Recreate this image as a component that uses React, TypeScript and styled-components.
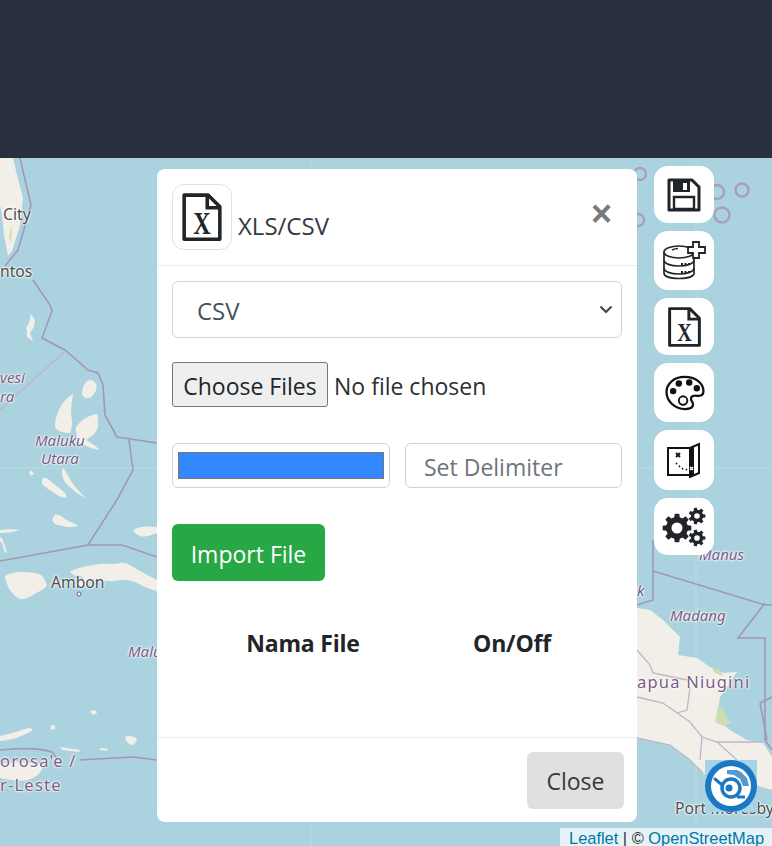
import React from 'react';
import styled, { createGlobalStyle } from 'styled-components';

const GlobalStyle = createGlobalStyle`
  html, body { margin: 0; padding: 0; height: 100%; overflow: hidden; }
  body { font-family: "Open Sans", "Noto Sans", sans-serif; color: #212529; background: #aad3df; }
`;

const Page = styled.div`
  width: 772px;
  height: 846px;
  display: flex;
  flex-direction: column;
  overflow: hidden;
`;

const TopBar = styled.header`
  height: 158px;
  flex: none;
  background: #282f3e;
`;

const MapArea = styled.main`
  position: relative;
  flex: 1;
  overflow: hidden;
  background: #aad3df;
`;

const MapSvg = styled.svg`
  display: block;
  width: 772px;
  height: 688px;
  filter: blur(0.5px);
`;

const MapLabel = styled.span<{ $x: number; $y: number; $kind: 'city' | 'region' | 'country' }>`
  position: absolute;
  left: ${({ $x }) => $x}px;
  top: ${({ $y }) => $y - 158}px;
  font-family: "Noto Sans", sans-serif;
  font-size: ${({ $kind }) => ($kind === 'country' ? 16.5 : $kind === 'city' ? 15.7 : 15)}px;
  font-style: ${({ $kind }) => ($kind === 'region' ? 'italic' : 'normal')};
  color: ${({ $kind }) => ($kind === 'city' ? '#4d4d4d' : '#7b5c85')};
  letter-spacing: ${({ $kind }) => ($kind === 'country' ? '1.2px' : '0')};
  line-height: 1;
  white-space: nowrap;
  text-shadow: 0 0 2px #fff, 0 0 2px #fff, 0 0 3px #fff;
`;

const ToolStack = styled.nav`
  position: absolute;
  left: 654px;
  top: 8px;
  display: flex;
  flex-direction: column;
  gap: 8px;
`;

const ToolButton = styled.button<{ $h: number }>`
  width: 60px;
  height: ${({ $h }) => $h}px;
  padding: 0;
  border: 0;
  border-radius: 14px;
  background: #fff;
  color: #212529;
  display: flex;
  align-items: center;
  justify-content: center;
`;

const Badge = styled.div`
  position: absolute;
  left: 705px;
  top: 602px;
  width: 52px;
  height: 52px;
  background: #a6d4e6;
`;

const Attribution = styled.div`
  position: absolute;
  right: 0;
  bottom: 0;
  height: 18px;
  padding: 0 8px 0 9px;
  background: rgba(255, 255, 255, 0.7);
  font-family: "Liberation Sans", Arial, sans-serif;
  font-size: 16.4px;
  line-height: 21px;
  color: #333;
  white-space: nowrap;
`;

const AttrLink = styled.a`
  color: #0078a8;
  text-decoration: none;
`;

const Modal = styled.section`
  position: absolute;
  left: 157px;
  top: 11px;
  width: 480px;
  height: 653px;
  display: flex;
  flex-direction: column;
  background: #fff;
  border-radius: 8px;
`;

const ModalHeader = styled.div`
  height: 97px;
  flex: none;
  box-sizing: border-box;
  padding: 15px;
  display: flex;
  align-items: flex-start;
  border-bottom: 1px solid #e9ecef;
`;

const IconFrame = styled.div`
  width: 60px;
  height: 66px;
  box-sizing: border-box;
  border: 1px solid #dee2e6;
  border-radius: 12px;
  display: flex;
  align-items: center;
  justify-content: center;
`;

const ModalTitle = styled.h5`
  margin: 24px 0 0 6px;
  font-size: 24px;
  line-height: 36px;
  font-weight: 400;
  color: #343a40;
  flex: 1;
`;

const CloseX = styled.button`
  margin: 12px 10px 0 0;
  padding: 0;
  border: 0;
  background: none;
  font-family: "Liberation Sans", Arial, sans-serif;
  font-size: 36px;
  line-height: 36px;
  font-weight: 700;
  color: #7a7a7a;
`;

const ModalBody = styled.div`
  flex: 1;
  padding: 15px 15px 0;
  display: flex;
  flex-direction: column;
`;

const TypeSelect = styled.select`
  width: 450px;
  height: 57px;
  flex: none;
  box-sizing: border-box;
  padding: 2px 18px 0 24px;
  font: inherit;
  font-size: 24px;
  color: #495057;
  appearance: none;
  background: #fff url("data:image/svg+xml,%3Csvg xmlns='http://www.w3.org/2000/svg' width='14' height='9' viewBox='0 0 14 9'%3E%3Cpath d='M1.500 1.500L7 7l5.500-5.500' fill='none' stroke='%23444' stroke-width='2'/%3E%3C/svg%3E") no-repeat right 8px center;
  border: 1px solid #ced4da;
  border-radius: 6px;
`;

const FileInput = styled.input`
  margin-top: 24px;
  height: 45px;
  font: inherit;
  font-size: 23px;
  color: #2b2f33;

  &::file-selector-button {
    height: 45px;
    width: 156px;
    margin-right: 6px;
    padding: 2px 0 0;
    font: inherit;
    font-size: 23px;
    color: #212529;
    background: #efefef;
    border: 1px solid #767676;
    border-radius: 3px;
  }
`;

const ColorRow = styled.div`
  margin-top: 36px;
  display: grid;
  grid-template-columns: 218px 217px;
  gap: 15px;
`;

const ColorField = styled.input`
  width: 218px;
  height: 45px;
  box-sizing: border-box;
  padding: 8px 5px;
  background: #fff;
  border: 1px solid #ced4da;
  border-radius: 6px;

  &::-webkit-color-swatch-wrapper {
    padding: 0;
  }

  &::-webkit-color-swatch {
    border: 1px solid #767676;
    border-radius: 0;
  }
`;

const DelimiterField = styled.input`
  width: 217px;
  height: 45px;
  box-sizing: border-box;
  padding: 2px 18px 0;
  font: inherit;
  font-size: 23px;
  color: #495057;
  border: 1px solid #ced4da;
  border-radius: 6px;

  &::placeholder {
    color: #6c757d;
    opacity: 1;
  }
`;

const ImportButton = styled.button`
  margin-top: 36px;
  width: 153px;
  height: 57px;
  padding: 2px 0 0;
  font: inherit;
  font-size: 23px;
  color: #fff;
  background: #28a745;
  border: 0;
  border-radius: 6px;
`;

const FileTable = styled.div`
  margin-top: 44px;
  display: grid;
  grid-template-columns: 262px 156px;
  font-size: 23px;
  letter-spacing: -0.2px;
  line-height: 36px;
  font-weight: 700;
  text-align: center;
  color: #212529;
`;

const ModalFooter = styled.div`
  height: 85px;
  flex: none;
  box-sizing: border-box;
  padding: 14px 13px;
  display: flex;
  justify-content: flex-end;
  border-top: 1px solid #e9ecef;
`;

const CloseButton = styled.button`
  width: 97px;
  height: 57px;
  padding: 0;
  font: inherit;
  font-size: 23px;
  color: #343a40;
  background: #e0e0e0;
  border: 0;
  border-radius: 6px;
`;

const FileXIcon = ({ size }: { size: number }) => (
  <svg width={size} height={size * 1.2} viewBox="0 0 40 48">
    <path d="M3 3h23l11 11v31H3z" fill="none" stroke="#212529" strokeWidth="3.4" strokeLinejoin="round" />
    <path d="M25 3v12h12" fill="none" stroke="#212529" strokeWidth="3.4" />
    <text
      transform="translate(20 40) scale(1 1.3)"
      textAnchor="middle"
      fontFamily="Liberation Serif, serif"
      fontWeight="700"
      fontSize="23"
      fill="#212529"
    >
      X
    </text>
  </svg>
);

const SaveIcon = () => (
  <svg width="34" height="34" viewBox="0 0 34 34">
    <path d="M2 2h23l7 7v23H2z" fill="none" stroke="#212529" strokeWidth="3" strokeLinejoin="round" />
    <path d="M6 3h17v11H6z" fill="#212529" />
    <path d="M16 5h4v7h-4z" fill="#fff" />
    <path d="M7 19h20v12H7z" fill="none" stroke="#212529" strokeWidth="2.4" />
  </svg>
);

const DatabasePlusIcon = () => (
  <svg width="44" height="40" viewBox="0 0 44 40">
    <g fill="none" stroke="#212529" strokeWidth="1.700">
      <ellipse cx="17" cy="11" rx="15" ry="6" />
      <path d="M2 11v8c0 3.600 6.700 6 15 6s15-2.400 15-6v-8" />
      <path d="M2 19v8c0 3.600 6.700 6 15 6s15-2.400 15-6v-8" />
      <path d="M2 27v5c0 3.600 6.700 5.500 15 5.500S32 35.600 32 32v-5" />
    </g>
    <path d="M10 9c2-1 4-1.500 6-1.500" fill="none" stroke="#212529" strokeWidth="1.500" />
    <path d="M19 23h9M19 31h9" stroke="#212529" strokeWidth="1.800" strokeDasharray="2 1.500" />
    <path d="M31 1h6v5h6v6h-6v5h-6v-5h-5V6h5z" fill="#fff" stroke="#212529" strokeWidth="1.800" />
  </svg>
);

const PaletteIcon = () => (
  <svg width="41" height="36" viewBox="0 0 42 38">
    <path
      d="M21 2C10 2 2 9 2 18c0 9 8 18 20 18 5 0 8-2 8-5 0-3-3-4-2-7 1-3 5-2 8-2 3 0 5-2 5-5C41 8 32 2 21 2z"
      fill="none"
      stroke="#111"
      strokeWidth="2.400"
    />
    <circle cx="9" cy="17" r="3.400" fill="#111" />
    <circle cx="15" cy="9" r="3.400" fill="#111" />
    <circle cx="26" cy="8" r="3.400" fill="#111" />
    <circle cx="34" cy="14" r="3.400" fill="#111" />
    <circle cx="19.500" cy="27" r="4.500" fill="none" stroke="#111" strokeWidth="2" />
  </svg>
);

const TreasureMapIcon = () => (
  <svg width="34" height="36" viewBox="0 0 34 36">
    <path d="M1 6h22v27H1z" fill="none" stroke="#111" strokeWidth="2" />
    <path d="M23 6l9-4v29l-9 4z" fill="#fff" stroke="#111" strokeWidth="2" />
    <path d="M22 5h5v28h-5z" fill="#111" />
    <path d="M9 11l4 4m0-4l-4 4" stroke="#111" strokeWidth="1.800" />
    <path d="M9 21l3 3 4 3 5 1 4-2" fill="none" stroke="#111" strokeWidth="1.600" strokeDasharray="1.500 2.500" />
    <path d="M23 25l3 3m0-3l-3 3" stroke="#fff" strokeWidth="1.400" />
  </svg>
);

// outline of a toothed wheel with a round hole, teeth spaced evenly round the rim
const gearPath = (cx: number, cy: number, outer: number, root: number, hole: number, teeth: number) => {
  const step = (Math.PI * 2) / teeth;
  const pts: string[] = [];
  for (let i = 0; i < teeth; i++) {
    const a = i * step;
    const corners: [number, number][] = [
      [a - step * 0.32, root],
      [a - step * 0.2, outer],
      [a + step * 0.2, outer],
      [a + step * 0.32, root],
    ];
    corners.forEach(([ang, r]) => {
      pts.push(`${(cx + Math.cos(ang) * r).toFixed(2)} ${(cy + Math.sin(ang) * r).toFixed(2)}`);
    });
  }
  const ring = `M${cx - hole} ${cy}a${hole} ${hole} 0 1 0 ${hole * 2} 0a${hole} ${hole} 0 1 0 ${-hole * 2} 0z`;
  return `M${pts.join('L')}z${ring}`;
};

const GearsIcon = () => (
  <svg width="44" height="40" viewBox="0 0 44 40">
    <path d={gearPath(15, 21, 14.5, 11, 5.5, 8)} fill="#212529" fillRule="evenodd" />
    <path d={gearPath(35, 9, 8.500, 6.200, 2.800, 7)} fill="#212529" fillRule="evenodd" />
    <path d={gearPath(35, 31, 8.500, 6.200, 2.800, 7)} fill="#212529" fillRule="evenodd" />
  </svg>
);

const BadgeIcon = () => (
  <svg width="52" height="52" viewBox="0 0 52 52">
    <circle cx="26" cy="26" r="26" fill="#1b78c2" />
    <circle cx="26" cy="26" r="20" fill="#fff" />
    <path d="M22 10h10l4 2 6 6 2 8h-6l-3-7-6-4-7-1z" fill="#1b78c2" opacity="0.75" />
    <path d="M10 19l6 5" stroke="#1b78c2" strokeWidth="3" strokeLinecap="round" />
    <circle cx="26" cy="28" r="9" fill="none" stroke="#1b78c2" strokeWidth="3.500" />
    <circle cx="24" cy="28" r="3.500" fill="#1b78c2" />
    <path d="M32 37h8" stroke="#1b78c2" strokeWidth="3" />
  </svg>
);

const land = [
  'M0 158H13L17 175 23 198 20 225 12 251 8 256 4 235 2 215 0 205Z',
  'M31 314l4 6-1 7-4 6 3 8-6-4 0-6 -1-3 3-5Z',
  'M90 380c5 0 8 5 6 10-2 5-5 9-10 8-4-1-5-6-3-10 1-4 4-8 7-8Z',
  'M73 394c-9 5-16 15-18 30-1 7 8 9 15 9 3-6 2-13 1-20 0-6 1-13 2-19Z',
  'M97 414c-8 1-16 6-21 13-1 6 3 10 0 14 5 1 12 8 24 9-4-4-9-7-14-10 6-4 13-8 12-18 0-3 0-6-1-8Z',
  'M63 468c-2 5-1 10 3 15 5 6 12 11 21 16-7-6-12-12-16-18-3-5-5-10-8-13Z',
  'M43 478c-2 3-1 8 3 9 2 3 4 3 7 5 4 3 10 7 14 5-2-6-10-10-13-13-3-2-7-7-11-6Z',
  'M31 470l3 4-3 2-2-3Z',
  'M55 515c-4 3-3 9 3 10 7 2 14 3 20 1-4-4-9-4-13-7-3-3-7-5-10-4Z',
  'M0 530c7-1 14-1 20 0-6 2-13 3-20 3Z',
  'M0 537l2 1 5 14-2 1-3-10-2-2Z',
  'M5 576c6-5 24-5 34-2 5 2 6 7 8 11-3 6-9 6-14 10-5 3-10 5-13 4-7-3-11-10-13-15-1-3-2-6-2-8Z',
  'M70 572c8-5 18-6 28-8 10-1 14 1 22-1 7-1 12 4 20 8l17 9v11l-10-3c-6-3-12-7-20-8-8-1-12 2-18 1-5 0-11-1-18-2-4 4-7 8-11 8-4 0-1-4 1-6l3-3c-3-2-6-3-9-2-2-1-4-3-5-4Z',
  'M133 530c7-4 13-4 24-3v6c-8 3-14 5-19 2-2-1-4-3-5-5Z',
  'M0 736c8-2 14-3 19-5 5-2 10-4 14-2-3 4-8 5-12 7-6 3-13 4-21 5Z',
  'M0 764c15-3 28-2 43 1-1 6-5 11-10 13-8 4-20 3-33 0Z',
  'M50 726l5-1 0 4-4 1Z',
  'M60 747l20 3-1 2-17-2Z',
  'M100 748l8 1-1 2-7-1Z',
  'M90 711l5-1 2 3-4 2Z',
  'M125 737c4-2 9-1 12 2-1 4-3 6-6 6-3-1-6-5-6-8Z',
  'M637 608L650 610 663 620 680 637 678 655 697 658 710 667 723 673 737 672 720 697 717 720 730 730 747 740 763 743 772 757V790L755 785 735 790 715 785 703 773 690 760 670 745 637 738Z',
];

const borders = [
  'M20 158l11 47-13 45-13 16',
  'M33 280l17 25 2 6-10 27 23 12 23 20 10 3 5 12 2 30 12 22 40 6',
  'M129 440l4 30-15 28-30 47-88 16',
  'M88 545h34l35 12',
  'M80 760l53-3 24 3',
  'M0 750c20-2 40-2 52 2l6 8',
  'M653 540v60l-16 5',
  'M653 571l112 34h7',
  'M765 603l-27 35h27v102l7 10',
  'M760 703l12-6',
  'M760 703l7 37',
];

const thinBorders = [
  'M65 351l-65 59',
  'M637 650l13 15 3 8 34 7',
  'M637 697l26 6 27 19 12 15 15 5h46',
  'M690 687l-3 23-10 3',
  'M702 737l-2 23',
  'M717 742l20 18',
  'M637 738l33 7 20 15 13 13',
];

export default function App() {
  return (
    <Page>
      <GlobalStyle />
      <TopBar />
      <MapArea>
        <MapSvg viewBox="0 158 772 688">
          {land.map((d) => (
            <path key={d} d={d} fill="#f2efe9" />
          ))}
          <path d="M712 668l8 2 3 6-8-3zM718 705l6 5 3 10 5 3-8 3-9-4 2-8z" fill="#c9dfb2" />
          <path d="M9 236l2 8 1-20z" fill="#cfe0a8" />
          {thinBorders.map((d) => (
            <path key={d} d={d} fill="none" stroke="#c3b2c8" strokeWidth="1.300" />
          ))}
          {borders.map((d) => (
            <path key={d} d={d} fill="none" stroke="#a397b5" strokeWidth="1.600" />
          ))}
          <g fill="none" stroke="#a99fbc" strokeWidth="2.400">
            <circle cx="742" cy="190" r="6.500" />
            <circle cx="722" cy="215" r="7.500" />
            <circle cx="717" cy="192" r="7" />
            <circle cx="640" cy="174" r="6" />
            <circle cx="638" cy="220" r="6" />
          </g>
          <path d="M311 158v688M696 158v688M0 468h772" stroke="#fff" strokeWidth="1" opacity="0.18" />
          <circle cx="79" cy="594" r="2" fill="#fff" stroke="#666" />
        </MapSvg>

        <MapLabel $kind="city" $x={3} $y={207}>City</MapLabel>
        <MapLabel $kind="city" $x={0} $y={264}>ntos</MapLabel>
        <MapLabel $kind="region" $x={0} $y={370}>vesi</MapLabel>
        <MapLabel $kind="region" $x={0} $y={389}>ra</MapLabel>
        <MapLabel $kind="region" $x={35} $y={433}>Maluku</MapLabel>
        <MapLabel $kind="region" $x={41} $y={451}>Utara</MapLabel>
        <MapLabel $kind="city" $x={51} $y={575}>Ambon</MapLabel>
        <MapLabel $kind="region" $x={128} $y={644}>Malu</MapLabel>
        <MapLabel $kind="country" $x={0} $y={753}>orosa'e /</MapLabel>
        <MapLabel $kind="country" $x={0} $y={777}>r-Leste</MapLabel>
        <MapLabel $kind="region" $x={699} $y={547}>Manus</MapLabel>
        <MapLabel $kind="region" $x={670} $y={608}>Madang</MapLabel>
        <MapLabel $kind="region" $x={637} $y={583}>k</MapLabel>
        <MapLabel $kind="country" $x={637} $y={674}>apua Niugini</MapLabel>
        <MapLabel $kind="city" $x={675} $y={801}>Port Moresby</MapLabel>

        <ToolStack>
          <ToolButton $h={57}><SaveIcon /></ToolButton>
          <ToolButton $h={59}><DatabasePlusIcon /></ToolButton>
          <ToolButton $h={57}><FileXIcon size={35} /></ToolButton>
          <ToolButton $h={59}><PaletteIcon /></ToolButton>
          <ToolButton $h={60}><TreasureMapIcon /></ToolButton>
          <ToolButton $h={57}><GearsIcon /></ToolButton>
        </ToolStack>

        <Badge><BadgeIcon /></Badge>

        <Attribution>
          <AttrLink href="#">Leaflet</AttrLink> | © <AttrLink href="#">OpenStreetMap</AttrLink>
        </Attribution>

        <Modal>
          <ModalHeader>
            <IconFrame><FileXIcon size={42} /></IconFrame>
            <ModalTitle>XLS/CSV</ModalTitle>
            <CloseX>×</CloseX>
          </ModalHeader>
          <ModalBody>
            <TypeSelect defaultValue="CSV">
              <option>CSV</option>
              <option>XLS</option>
            </TypeSelect>
            <FileInput type="file" multiple />
            <ColorRow>
              <ColorField type="color" defaultValue="#3388ff" />
              <DelimiterField type="text" placeholder="Set Delimiter" />
            </ColorRow>
            <div>
              <ImportButton>Import File</ImportButton>
            </div>
            <FileTable>
              <div>Nama File</div>
              <div>On/Off</div>
            </FileTable>
          </ModalBody>
          <ModalFooter>
            <CloseButton>Close</CloseButton>
          </ModalFooter>
        </Modal>
      </MapArea>
    </Page>
  );
}
